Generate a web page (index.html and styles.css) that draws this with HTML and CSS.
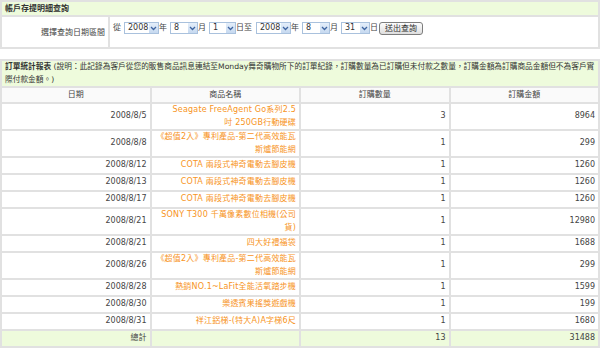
FILE: index.html
```html
<!DOCTYPE html>
<html lang="zh-Hant">
<head>
  <meta charset="UTF-8" />
  <title>帳戶存提明細查詢</title>
  <link rel="stylesheet" href="styles.css">
</head>
<body>

  <!-- Query panel -->
  <table class="panel query">
    <colgroup><col class="label-col"><col></colgroup>
    <tr class="title-row"><th class="panel-title" colspan="2">帳戶存提明細查詢</th></tr>
    <tr>
      <td class="query-label">選擇查詢日期區間</td>
      <td class="query-field">
        <form class="date-form">
          <span>從</span>
          <span class="sel year"><select><option>2008</option></select><svg viewBox="0 0 9 10"><path d="M2 4 L4.5 6.5 L7 4" /></svg></span>
          <span>年</span>
          <span class="sel month"><select><option>8</option></select><svg viewBox="0 0 9 10"><path d="M2 4 L4.5 6.5 L7 4" /></svg></span>
          <span>月</span>
          <span class="sel day"><select><option>1</option></select><svg viewBox="0 0 9 10"><path d="M2 4 L4.5 6.5 L7 4" /></svg></span>
          <span class="wide">日至</span>
          <span class="sel year"><select><option>2008</option></select><svg viewBox="0 0 9 10"><path d="M2 4 L4.5 6.5 L7 4" /></svg></span>
          <span>年</span>
          <span class="sel month"><select><option>8</option></select><svg viewBox="0 0 9 10"><path d="M2 4 L4.5 6.5 L7 4" /></svg></span>
          <span>月</span>
          <span class="sel day2"><select><option>31</option></select><svg viewBox="0 0 9 10"><path d="M2 4 L4.5 6.5 L7 4" /></svg></span>
          <span>日</span>
          <button type="submit" class="btn">送出查詢</button>
        </form>
      </td>
    </tr>
  </table>

  <!-- Order report -->
  <table class="panel report">
    <colgroup><col><col><col><col></colgroup>
    <tr>
      <th class="panel-title note" colspan="4"><b>訂單統計報表</b> (說明：此記錄為客戶從您的販售商品訊息連結至Monday舞奇購物所下的訂單紀錄，訂購數量為已訂購但未付款之數量，訂購金額為訂購商品金額但不為客戶實際付款金額。)</th>
    </tr>
    <tr class="head">
      <th>日期</th><th>商品名稱</th><th>訂購數量</th><th>訂購金額</th>
    </tr>
    <tr><td>2008/8/5</td><td><a href="#">Seagate FreeAgent Go系列2.5<br>吋 250GB行動硬碟</a></td><td>3</td><td>8964</td></tr>
    <tr><td>2008/8/8</td><td><a href="#">《超值2入》專利產品-第二代高效能瓦<br>斯爐節能網</a></td><td>1</td><td>299</td></tr>
    <tr><td>2008/8/12</td><td><a href="#">COTA 兩段式神奇電動去腳皮機</a></td><td>1</td><td>1260</td></tr>
    <tr><td>2008/8/13</td><td><a href="#">COTA 兩段式神奇電動去腳皮機</a></td><td>1</td><td>1260</td></tr>
    <tr><td>2008/8/17</td><td><a href="#">COTA 兩段式神奇電動去腳皮機</a></td><td>1</td><td>1260</td></tr>
    <tr><td>2008/8/21</td><td><a href="#">SONY T300 千萬像素數位相機(公司<br>貨)</a></td><td>1</td><td>12980</td></tr>
    <tr><td>2008/8/21</td><td><a href="#">四大好禮福袋</a></td><td>1</td><td>1688</td></tr>
    <tr><td>2008/8/26</td><td><a href="#">《超值2入》專利產品-第二代高效能瓦<br>斯爐節能網</a></td><td>1</td><td>299</td></tr>
    <tr><td>2008/8/28</td><td><a href="#">熱銷NO.1~LaFit全能活氧踏步機</a></td><td>1</td><td>1599</td></tr>
    <tr><td>2008/8/30</td><td><a href="#">樂透賓果搖獎遊戲機</a></td><td>1</td><td>199</td></tr>
    <tr><td>2008/8/31</td><td><a href="#">祥江鋁梯-(特大A)A字梯6尺</a></td><td>1</td><td>1680</td></tr>
    <tr class="total"><td>總計</td><td></td><td>13</td><td>31488</td></tr>
  </table>

</body>
</html>
```

FILE: styles.css
```css
body {
  margin: 0;
  font-family: "DejaVu Sans", "Noto Sans CJK TC", sans-serif;
  font-size: 8px;
  line-height: 12.5px;
  color: #444;
  background: #fff;
}

.panel {
  width: 100%;
  border-collapse: separate;
  border-spacing: 0;
  border: 1px solid #e1e1e1;
  table-layout: fixed;
}

.panel th,
.panel td {
  border: 1px solid #e1e1e1;
  padding: 0 3px;
}

.panel-title {
  background-color: #eefbdc;
  text-align: left;
  font-weight: normal;
  color: #333;
}

.panel-title b {
  color: #333;
}

/* query panel */
.query {
  margin-bottom: 10px;
}

.label-col {
  width: 108px;
}

.query .title-row {
  height: 15px;
}

.query .panel-title {
  font-weight: bold;
  line-height: 13px;
}

.query-label {
  text-align: right;
  vertical-align: middle;
  padding-top: 2px !important;
}

.query-field {
  padding: 5px 3px 13px !important;
  vertical-align: top;
}

.date-form {
  display: flex;
  align-items: center;
  height: 12px;
  margin: 0;
  line-height: 12px;
  white-space: nowrap;
}

.date-form > * {
  flex-shrink: 0;
}

.date-form .wide {
  margin-right: 1px;
}

.sel {
  position: relative;
  display: inline-block;
  height: 12px;
  margin-left: 3px;
}

.sel select {
  -webkit-appearance: none;
  appearance: none;
  box-sizing: border-box;
  height: 12px;
  margin: 0;
  padding: 0 0 0 3px;
  border: 1px solid #a9c1dd;
  border-radius: 0;
  background: #fff;
  font-family: "DejaVu Sans", sans-serif;
  font-size: 8px;
  line-height: 10px;
  color: #333;
}

.sel svg {
  position: absolute;
  right: 1px;
  top: 1px;
  width: 9px;
  height: 10px;
  background: linear-gradient(#e4eefa, #c6d9f0);
  pointer-events: none;
}

.sel svg path {
  fill: none;
  stroke: #3e64a0;
  stroke-width: 1.3;
}

.year select { width: 35px; }
.month select { width: 28px; }
.day select { width: 27px; }
.day2 select { width: 29px; }

.btn {
  box-sizing: border-box;
  width: 44px;
  height: 13px;
  margin-left: 1px;
  padding: 0;
  border: 1px solid #7d7d7d;
  border-radius: 3px;
  background: linear-gradient(#fdfdfd, #dedede);
  font-family: "DejaVu Sans", "Noto Sans CJK TC", sans-serif;
  font-size: 8px;
  line-height: 11px;
  color: #333;
}

/* report table */
.report col {
  width: 25%;
}

.report .note {
  font-size: 7.7px;
  padding-right: 1px;
}

.report tr {
  height: 17px;
}

.report .head {
  height: 16px;
}

.report .head th {
  background-color: #fafafa;
  font-weight: normal;
  text-align: center;
}

.report td {
  text-align: right;
}

.report a {
  color: #f7941d;
  text-decoration: none;
  letter-spacing: 0.2px;
}

.report .total td {
  background-color: #eefbdc;
}
```
